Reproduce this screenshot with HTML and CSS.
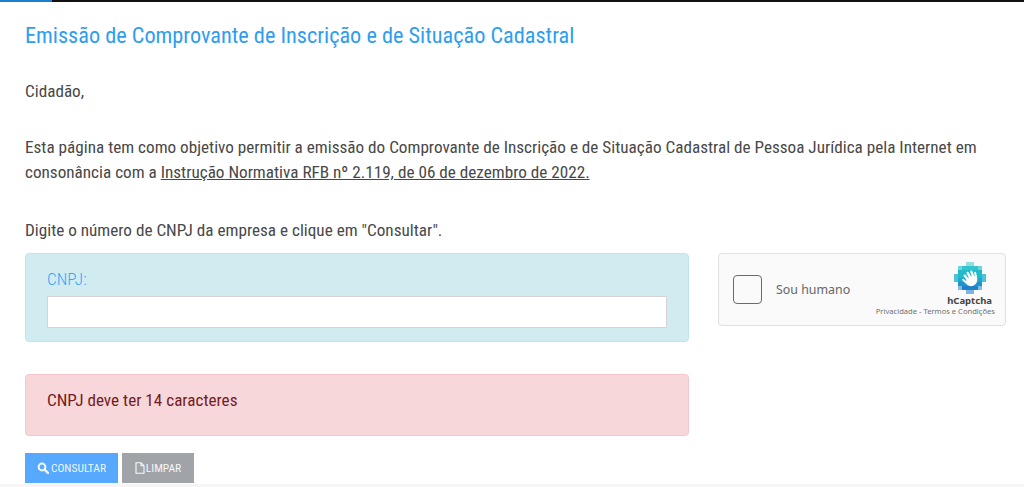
FILE: index.html
```html
<!DOCTYPE html>
<html lang="pt-BR">
<head>
<meta charset="utf-8">
<title>Emissão de Comprovante</title>
<link rel="stylesheet" href="styles.css">
</head>
<body>
<div class="topbar"><div class="progress"></div></div>
<main class="page">
  <h1 class="title">Emissão de Comprovante de Inscrição e de Situação Cadastral</h1>
  <p class="greet">Cidadão,</p>
  <p class="intro">Esta página tem como objetivo permitir a emissão do Comprovante de Inscrição e de Situação Cadastral de Pessoa Jurídica pela Internet em consonância com a <a href="#">Instrução Normativa RFB nº 2.119, de 06 de dezembro de 2022.</a></p>
  <p class="hint">Digite o número de CNPJ da empresa e clique em "Consultar".</p>
  <div class="columns">
    <div class="left">
      <div class="panel info">
        <label class="label" for="cnpj">CNPJ:</label>
        <input class="input" id="cnpj" type="text">
      </div>
      <div class="panel error">CNPJ deve ter 14 caracteres</div>
      <div class="buttons">
        <button class="btn primary"><svg class="ico" viewBox="0 0 12 12"><circle cx="5" cy="5" r="3.4" fill="none" stroke="currentColor" stroke-width="2"/><path d="M7.6 7.6 11 11" stroke="currentColor" stroke-width="2.4" stroke-linecap="round"/></svg>CONSULTAR</button>
        <button class="btn secondary"><svg class="ico file" viewBox="0 0 10 12"><path d="M1 .7h5l3 3v7.6H1z M6 .7v3h3" fill="none" stroke="currentColor" stroke-width="1.1"/></svg>LIMPAR</button>
      </div>
    </div>
    <div class="captcha">
      <span class="box"></span>
      <span class="human">Sou humano</span>
      <div class="brand">
        <svg class="logo" viewBox="0 0 32 32" shape-rendering="crispEdges">
          <rect x="12" y="0" width="8" height="4" fill="#8fe0df"/>
          <rect x="4" y="4" width="24" height="4" fill="#6ed6d8"/>
          <rect x="8" y="4" width="16" height="4" fill="#35c4cf"/>
          <rect x="0" y="12" width="32" height="8" fill="#4cc4d6"/>
          <rect x="4" y="8" width="24" height="8" fill="#22bacb"/>
          <rect x="4" y="16" width="24" height="4" fill="#1ea6cf"/>
          <rect x="4" y="20" width="24" height="4" fill="#1f93cc"/>
          <rect x="4" y="24" width="24" height="4" fill="#7fbde6"/>
          <rect x="8" y="24" width="16" height="4" fill="#1f82c8"/>
          <rect x="12" y="28" width="8" height="4" fill="#7db4e4"/>
          <path shape-rendering="auto" fill="#fff" d="M8 17.5c1-1 2.2-.5 3 .4l1 1 .6-.6-2.9-4.2c-.8-1.3 1-2.4 1.9-1.2l2.6 3.3.6-.4-2.2-4.6c-.6-1.4 1.4-2.2 2-.9l2.5 4.4.6-.3-1.4-4.6c-.4-1.4 1.6-2 2.1-.6l1.8 4.9.6-.2-.6-2.8c-.2-1.4 1.7-1.7 2-.4l1 5.6c.4 2.4-.2 4.4-1.8 6-2.2 2.2-5.6 2.6-8 .8-1.9-1.5-3.6-3.4-5.4-5z"/>
        </svg>
        <span class="name">hCaptcha</span>
        <span class="links">Privacidade - Termos e Condições</span>
      </div>
    </div>
  </div>
</main>
<div class="footer-strip"></div>
</body>
</html>
```

FILE: styles.css
```css
html, body { margin: 0; padding: 0; height: 487px; overflow: hidden; background: #fff; }
body { font-family: "Roboto Condensed", Roboto, "Liberation Sans", sans-serif; font-stretch: 87.5%; color: #484848; font-size: 17.16px; }
.topbar { height: 2px; background: #111; }
.progress { width: 52px; height: 2px; background: #1a7fd0; }
.page { padding: 0 18px 0 25px; }
.title { margin: 19px 0 0; font-size: 22.28px; line-height: 28px; font-weight: 400; color: #2e9df0; }
.greet { margin: 29px 0 0; line-height: 26px; }
.intro { margin: 30.5px 0 0; line-height: 25.5px; }
.intro a { color: inherit; text-decoration: underline; }
.hint { margin: 31.5px 0 0; line-height: 26px; }
.columns { display: flex; gap: 29px; margin-top: 10px; align-items: flex-start; }
.left { width: 664px; flex: none; }
.panel { box-sizing: border-box; border-radius: 4px; border: 1px solid; padding: 0 21px; }
.info { height: 89px; background: #d1ecf1; border-color: #bee5eb; padding-top: 15px; }
.label { display: block; color: #35a5f5; line-height: 20px; font-weight: 300; }
.input { display: block; box-sizing: border-box; width: 100%; height: 32px; margin-top: 7px; background: #fff; border: 1px solid #d4d4d4; border-radius: 0; padding: 0; }
.error { height: 62px; margin-top: 32px; background: #f8d7da; border-color: #f5c6cb; color: #721c24; line-height: 50px; }
.buttons { display: flex; gap: 4px; margin-top: 17px; }
.btn { display: flex; align-items: center; justify-content: center; height: 30px; border: 0; padding: 0; font-family: "Roboto Condensed", Roboto, sans-serif; font-stretch: 87.5%; font-size: 11.5px; color: rgba(255, 255, 255, .92); }
.primary { width: 93px; background: #56a9ff; }
.secondary { width: 72px; background: #a0a4a9; }
.ico { width: 12px; height: 12px; margin-right: 2px; }
.file { width: 10px; margin-right: 1px; }
.captcha { box-sizing: border-box; display: flex; align-items: center; width: 288px; height: 73px; background: #fafafa; border: 1px solid #e0e0e0; border-radius: 4px; }
.box { box-sizing: border-box; width: 29px; height: 29px; margin-left: 14px; border: 1px solid #6b6b6b; border-radius: 4px; flex: none; background: #fafafa; }
.human { margin-left: 14px; font-family: "Noto Sans", sans-serif; font-stretch: normal; font-size: 12.4px; color: #666; }
.brand { margin-left: auto; margin-right: 10px; display: flex; flex-direction: column; align-items: flex-end; align-self: flex-start; padding-top: 8px; font-stretch: normal; }
.logo { width: 32px; height: 32px; display: block; margin-right: 9px; }
.name { font-family: "Noto Sans", sans-serif; font-weight: 700; font-size: 9.5px; line-height: 12px; color: #444; margin-top: 1px; margin-right: 3px; }
.links { font-family: "Noto Sans", sans-serif; font-size: 7.6px; line-height: 11px; margin-top: -1px; color: #707070; }
.footer-strip { position: absolute; left: 0; right: 0; top: 484px; height: 3px; background: #f5f5f5; }
```
